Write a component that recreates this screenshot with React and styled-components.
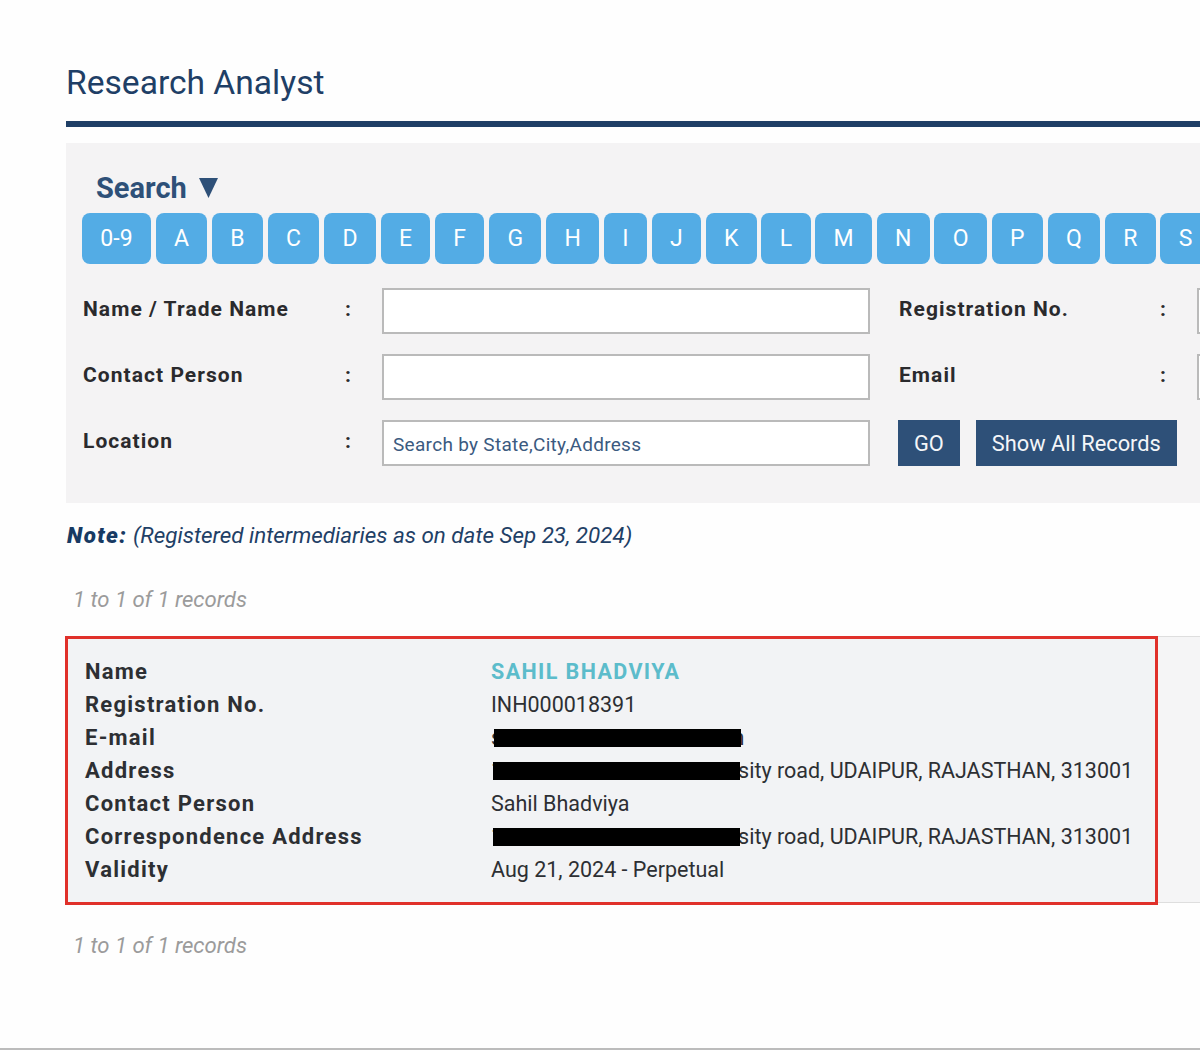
import React from 'react'
import styled, { createGlobalStyle } from 'styled-components'

const letters = ['0-9', ...'ABCDEFGHIJKLMNOPQRS'.split('')]

const GlobalStyle = createGlobalStyle`
  html, body {
    margin: 0;
    padding: 0;
    background: #fefefe;
  }
  * {
    box-sizing: border-box;
  }
`

const Page = styled.div`
  width: 1200px;
  height: 1050px;
  overflow: hidden;
  padding-left: 66px;
  border-bottom: 2px solid #bcbcbc;
  font-family: Roboto, 'Liberation Sans', sans-serif;
`

const Title = styled.h1`
  margin: 0;
  padding-top: 61px;
  height: 121px;
  font-size: 33.6px;
  line-height: 44px;
  font-weight: 400;
  color: #1f3f66;
`

const Rule = styled.div`
  width: 1134px;
  height: 6px;
  background: #1f3f66;
`

const SearchPanel = styled.section`
  width: 1134px;
  height: 360px;
  margin-top: 16px;
  padding: 27px 0 0 16px;
  background: #f4f3f4;
`

const SearchHeading = styled.h2`
  margin: 0 0 0 14px;
  height: 43px;
  padding-bottom: 7px;
  font-size: 29px;
  line-height: 33px;
  font-weight: 700;
  color: #2e5078;
  display: flex;
  align-items: center;
  gap: 12px;
`

const Caret = styled.svg`
  width: 19px;
  height: 20px;
  fill: #2e5078;
`

const LetterBar = styled.div`
  display: flex;
  gap: 4.7px;
  width: 1200px;
`

const Letter = styled.a`
  flex: none;
  height: 51px;
  padding: 0 18.35px;
  border-radius: 8px;
  background: #53ace5;
  color: #fff;
  font-size: 23px;
  line-height: 51px;
`

const FormGrid = styled.div`
  display: grid;
  grid-template-columns: 262px 37px 488px 29px 261px 37px 100px;
  grid-auto-rows: 46px;
  row-gap: 20px;
  margin: 24px 0 0 1px;
  align-items: start;
`

const FieldLabel = styled.label`
  font-size: 21px;
  line-height: 42px;
  font-weight: 700;
  letter-spacing: 1.05px;
  color: #2a2a2d;
`

const Colon = styled.span`
  font-size: 21px;
  line-height: 42px;
  font-weight: 700;
  color: #2a2a2d;
`

const TextInput = styled.input`
  width: 100%;
  height: 46px;
  padding: 3px 9px 0;
  border: 2px solid #bababa;
  border-radius: 0;
  background: #fff;
  font-family: inherit;
  font-size: 19px;
  letter-spacing: 0.3px;
  outline: none;

  &::placeholder {
    color: #3b5a80;
    opacity: 1;
  }
`

const Actions = styled.div`
  grid-column: 5 / span 3;
  margin-left: -1px;
  display: flex;
  gap: 16px;
`

const ActionButton = styled.button`
  height: 46px;
  padding: 0 16px;
  border: 0;
  border-radius: 0;
  background: #2e5078;
  color: #f4f6f9;
  font-family: inherit;
  font-size: 21.8px;
`

const Note = styled.p`
  margin: 0;
  padding: 18px 0 0 1px;
  height: 83px;
  font-size: 22.4px;
  line-height: 28px;
  font-style: italic;
  color: #1f4066;

  strong {
    font-weight: 900;
    letter-spacing: 1.4px;
    color: #173a63;
  }
`

const RecordCount = styled.p`
  margin: 0;
  padding-left: 7px;
  height: 50px;
  font-size: 22.1px;
  line-height: 26px;
  font-style: italic;
  color: #9b9b9b;
`

const ResultRow = styled.div`
  width: 1134px;
  height: 267px;
  background: #f5f5f6;
  border-top: 1px solid #dedede;
  border-bottom: 1px solid #dedede;
`

const Highlight = styled.div`
  width: 1093px;
  height: 269px;
  margin: -1px 0 0 -1px;
  padding: 16px 0 0 17px;
  border: 3px solid #e0302a;
  background: #f2f3f5;
`

const DetailRow = styled.div`
  display: grid;
  grid-template-columns: 406px auto;
  height: 33px;
  line-height: 33px;
  color: #2d2f33;
`

const DetailLabel = styled.span`
  font-size: 22px;
  font-weight: 700;
  letter-spacing: 1.25px;
`

const DetailValue = styled.span`
  white-space: nowrap;
  font-size: 21.5px;
  font-weight: ${props => (props.$name ? 700 : 400)};
  letter-spacing: ${props => (props.$name ? '1.4px' : '0')};
  color: ${props => (props.$name ? '#5cbccb' : 'inherit')};
`

const Redacted = styled.span`
  position: relative;
  display: inline-block;
  width: 247px;
  height: 18px;
  margin-left: ${props => props.$left}px;
  margin-right: ${props => props.$right}px;
  background: #000;
  vertical-align: -2px;
`

const FooterCount = styled(RecordCount)`
  margin-top: 29px;
`

const address = 'sity road, UDAIPUR, RAJASTHAN, 313001'

const details = [
  { label: 'Name', value: 'SAHIL BHADVIYA', name: true },
  { label: 'Registration No.', value: 'INH000018391' },
  { label: 'E-mail', lead: 's', bar: { left: -8.6, right: -8 }, value: 'n' },
  { label: 'Address', lead: '1', bar: { left: -10, right: -2 }, value: address },
  { label: 'Contact Person', value: 'Sahil Bhadviya' },
  { label: 'Correspondence Address', lead: '1', bar: { left: -10, right: -2 }, value: address },
  { label: 'Validity', value: 'Aug 21, 2024 - Perpetual' }
]

export default function App() {
  return (
    <Page>
      <GlobalStyle />
      <Title>Research Analyst</Title>
      <Rule />

      <SearchPanel>
        <SearchHeading>
          Search
          <Caret viewBox="0 0 19 20">
            <polygon points="0,0 19,0 9.5,20" />
          </Caret>
        </SearchHeading>

        <LetterBar>
          {letters.map(letter => (
            <Letter key={letter}>{letter}</Letter>
          ))}
        </LetterBar>

        <FormGrid>
          <FieldLabel>Name / Trade Name</FieldLabel>
          <Colon>:</Colon>
          <TextInput />
          <span />
          <FieldLabel>Registration No.</FieldLabel>
          <Colon>:</Colon>
          <TextInput />

          <FieldLabel>Contact Person</FieldLabel>
          <Colon>:</Colon>
          <TextInput />
          <span />
          <FieldLabel>Email</FieldLabel>
          <Colon>:</Colon>
          <TextInput />

          <FieldLabel>Location</FieldLabel>
          <Colon>:</Colon>
          <TextInput placeholder="Search by State,City,Address" />
          <span />
          <Actions>
            <ActionButton>GO</ActionButton>
            <ActionButton>Show All Records</ActionButton>
          </Actions>
        </FormGrid>
      </SearchPanel>

      <Note>
        <strong>Note:</strong> (Registered intermediaries as on date Sep 23, 2024)
      </Note>

      <RecordCount>1 to 1 of 1 records</RecordCount>

      <ResultRow>
        <Highlight>
          {details.map(item => (
            <DetailRow key={item.label}>
              <DetailLabel>{item.label}</DetailLabel>
              <DetailValue $name={item.name}>
                {item.lead}
                {item.bar && <Redacted $left={item.bar.left} $right={item.bar.right} />}
                {item.value}
              </DetailValue>
            </DetailRow>
          ))}
        </Highlight>
      </ResultRow>

      <FooterCount>1 to 1 of 1 records</FooterCount>
    </Page>
  )
}
